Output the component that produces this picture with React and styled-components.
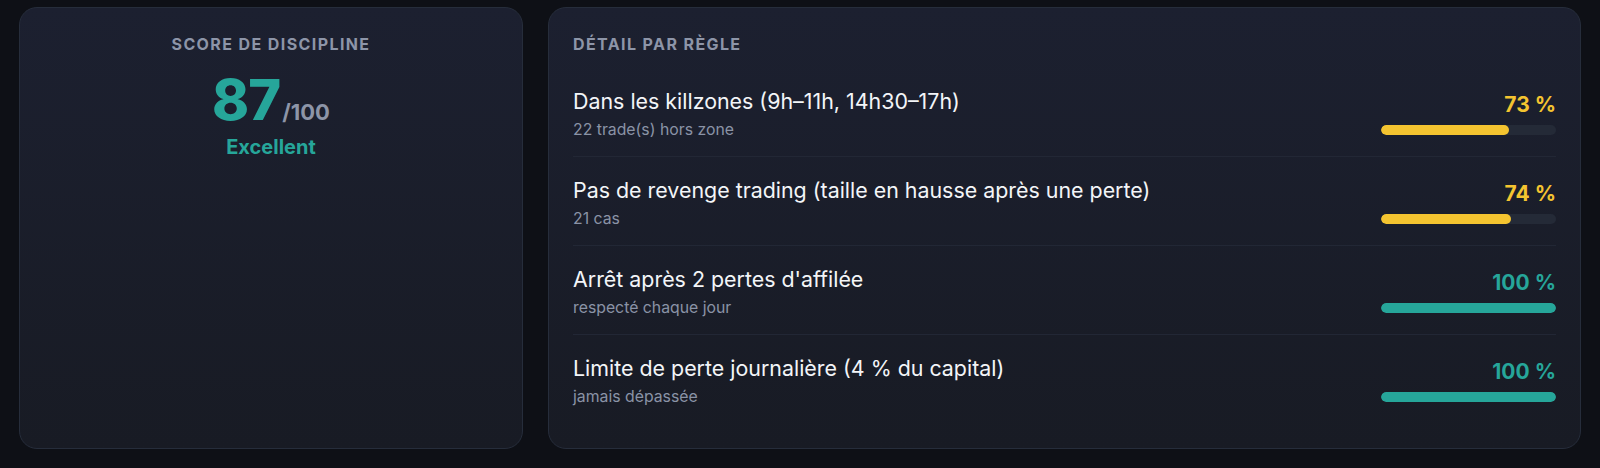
import styled, { createGlobalStyle } from "styled-components";

const GlobalStyle = createGlobalStyle`
  * { box-sizing: border-box; }
  body {
    margin: 0;
    background: #0e1016;
    font-family: Inter, "Noto Sans", sans-serif;
    color: #f1f3f7;
  }
`;

const TEAL = "#26a69a";
const YELLOW = "#f4c430";

const rules = [
  { title: "Dans les killzones (9h–11h, 14h30–17h)", note: "22 trade(s) hors zone", pct: 73 },
  { title: "Pas de revenge trading (taille en hausse après une perte)", note: "21 cas", pct: 74 },
  { title: "Arrêt après 2 pertes d'affilée", note: "respecté chaque jour", pct: 100 },
  { title: "Limite de perte journalière (4 % du capital)", note: "jamais dépassée", pct: 100 },
];

const tone = (pct) => (pct >= 85 ? TEAL : YELLOW);

export default function App() {
  return (
    <>
      <GlobalStyle />
      <Page>
        <ScoreCard>
          <CardLabel>Score de discipline</CardLabel>
          <Score>
            <ScoreValue>87</ScoreValue>
            <ScoreMax>/100</ScoreMax>
          </Score>
          <Verdict>Excellent</Verdict>
        </ScoreCard>
        <DetailCard>
          <CardLabel $align="left">Détail par règle</CardLabel>
          <RuleList>
            {rules.map(({ title, note, pct }, idx) => (
              <Rule key={idx}>
                <RuleText>
                  <RuleTitle>{title}</RuleTitle>
                  <RuleNote>{note}</RuleNote>
                </RuleText>
                <RuleScore>
                  <Percent $color={tone(pct)}>{pct} %</Percent>
                  <Track>
                    <Fill $color={tone(pct)} style={{ width: `${pct}%` }} />
                  </Track>
                </RuleScore>
              </Rule>
            ))}
          </RuleList>
        </DetailCard>
      </Page>
    </>
  );
}

const Page = styled.main`
  display: grid;
  grid-template-columns: 504px 1fr;
  column-gap: 25px;
  padding: 7px 19px 20px;
  align-items: stretch;
`;

const Card = styled.section`
  border: 1px solid #262d3b;
  border-radius: 18px;
  background: linear-gradient(180deg, #1c2030 0%, #181b24 100%);
  padding: 24px;
`;

const ScoreCard = styled(Card)`
  display: flex;
  flex-direction: column;
  align-items: center;
`;

const DetailCard = styled(Card)``;

const CardLabel = styled.h2`
  margin: 0;
  font-size: 16px;
  line-height: 24px;
  font-weight: 700;
  letter-spacing: 1.4px;
  text-transform: uppercase;
  color: #8d95a8;
  text-align: ${({ $align }) => $align || "center"};
`;

const Score = styled.div`
  display: flex;
  align-items: baseline;
  margin-top: 16px;
  line-height: 1;
`;

const ScoreValue = styled.span`
  font-size: 56px;
  font-weight: 800;
  letter-spacing: -1px;
  color: ${TEAL};
`;

const ScoreMax = styled.span`
  font-size: 22px;
  font-weight: 700;
  color: #8d95a8;
  margin-left: 2px;
`;

const Verdict = styled.div`
  margin-top: 7px;
  font-size: 20px;
  font-weight: 700;
  color: ${TEAL};
`;

const RuleList = styled.div`
  margin-top: 12px;
  display: flex;
  flex-direction: column;
`;

const Rule = styled.div`
  display: flex;
  align-items: center;
  justify-content: space-between;
  gap: 24px;
  padding: 18px 0 16px;
  border-bottom: 1px solid #222735;

  &:last-child {
    border-bottom: none;
    padding-bottom: 17px;
  }
`;

const RuleText = styled.div`
  display: flex;
  flex-direction: column;
  gap: 3px;
`;

const RuleTitle = styled.div`
  font-size: 21.4px;
  line-height: 30px;
  font-weight: 400;
  color: #f3f5f8;
`;

const RuleNote = styled.div`
  font-size: 15.8px;
  line-height: 21px;
  color: #8a93a6;
`;

const RuleScore = styled.div`
  width: 175px;
  display: flex;
  flex-direction: column;
  align-items: flex-end;
  gap: 6px;
`;

const Percent = styled.div`
  font-size: 21px;
  line-height: 28px;
  font-weight: 700;
  color: ${({ $color }) => $color};
`;

const Track = styled.div`
  width: 100%;
  height: 10px;
  border-radius: 999px;
  background: #242a37;
  overflow: hidden;
`;

const Fill = styled.div`
  height: 100%;
  border-radius: 999px;
  background: ${({ $color }) => $color};
`;
